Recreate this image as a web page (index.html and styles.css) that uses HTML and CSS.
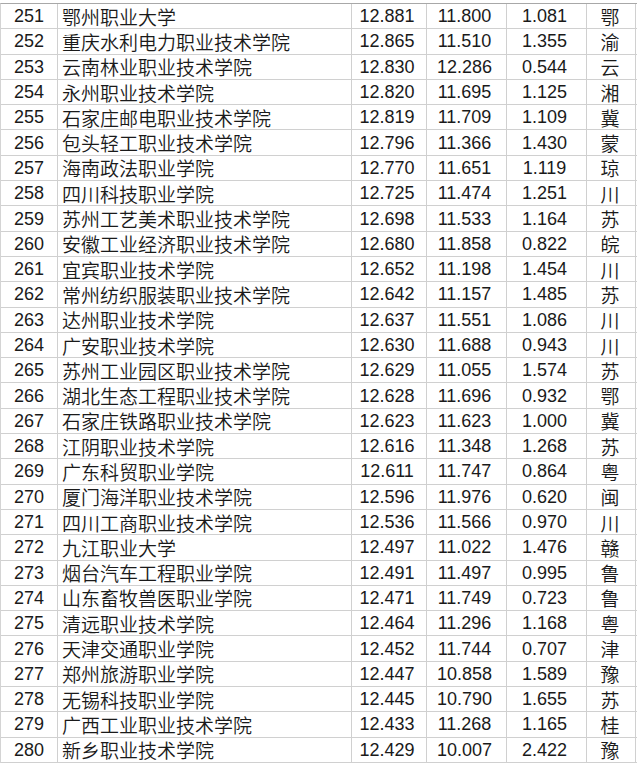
FILE: index.html
```html
<!DOCTYPE html>
<html lang="zh-CN">
<head>
<meta charset="utf-8">
<link rel="stylesheet" href="styles.css">
</head>
<body>
<div class="sheet">
<div class="row"><span class="c rank">251</span><span class="c name">鄂州职业大学</span><span class="c n">12.881</span><span class="c n">11.800</span><span class="c n">1.081</span><span class="c prov">鄂</span></div>
<div class="row"><span class="c rank">252</span><span class="c name">重庆水利电力职业技术学院</span><span class="c n">12.865</span><span class="c n">11.510</span><span class="c n">1.355</span><span class="c prov">渝</span></div>
<div class="row"><span class="c rank">253</span><span class="c name">云南林业职业技术学院</span><span class="c n">12.830</span><span class="c n">12.286</span><span class="c n">0.544</span><span class="c prov">云</span></div>
<div class="row"><span class="c rank">254</span><span class="c name">永州职业技术学院</span><span class="c n">12.820</span><span class="c n">11.695</span><span class="c n">1.125</span><span class="c prov">湘</span></div>
<div class="row"><span class="c rank">255</span><span class="c name">石家庄邮电职业技术学院</span><span class="c n">12.819</span><span class="c n">11.709</span><span class="c n">1.109</span><span class="c prov">冀</span></div>
<div class="row"><span class="c rank">256</span><span class="c name">包头轻工职业技术学院</span><span class="c n">12.796</span><span class="c n">11.366</span><span class="c n">1.430</span><span class="c prov">蒙</span></div>
<div class="row"><span class="c rank">257</span><span class="c name">海南政法职业学院</span><span class="c n">12.770</span><span class="c n">11.651</span><span class="c n">1.119</span><span class="c prov">琼</span></div>
<div class="row"><span class="c rank">258</span><span class="c name">四川科技职业学院</span><span class="c n">12.725</span><span class="c n">11.474</span><span class="c n">1.251</span><span class="c prov">川</span></div>
<div class="row"><span class="c rank">259</span><span class="c name">苏州工艺美术职业技术学院</span><span class="c n">12.698</span><span class="c n">11.533</span><span class="c n">1.164</span><span class="c prov">苏</span></div>
<div class="row"><span class="c rank">260</span><span class="c name">安徽工业经济职业技术学院</span><span class="c n">12.680</span><span class="c n">11.858</span><span class="c n">0.822</span><span class="c prov">皖</span></div>
<div class="row"><span class="c rank">261</span><span class="c name">宜宾职业技术学院</span><span class="c n">12.652</span><span class="c n">11.198</span><span class="c n">1.454</span><span class="c prov">川</span></div>
<div class="row"><span class="c rank">262</span><span class="c name">常州纺织服装职业技术学院</span><span class="c n">12.642</span><span class="c n">11.157</span><span class="c n">1.485</span><span class="c prov">苏</span></div>
<div class="row"><span class="c rank">263</span><span class="c name">达州职业技术学院</span><span class="c n">12.637</span><span class="c n">11.551</span><span class="c n">1.086</span><span class="c prov">川</span></div>
<div class="row"><span class="c rank">264</span><span class="c name">广安职业技术学院</span><span class="c n">12.630</span><span class="c n">11.688</span><span class="c n">0.943</span><span class="c prov">川</span></div>
<div class="row"><span class="c rank">265</span><span class="c name">苏州工业园区职业技术学院</span><span class="c n">12.629</span><span class="c n">11.055</span><span class="c n">1.574</span><span class="c prov">苏</span></div>
<div class="row"><span class="c rank">266</span><span class="c name">湖北生态工程职业技术学院</span><span class="c n">12.628</span><span class="c n">11.696</span><span class="c n">0.932</span><span class="c prov">鄂</span></div>
<div class="row"><span class="c rank">267</span><span class="c name">石家庄铁路职业技术学院</span><span class="c n">12.623</span><span class="c n">11.623</span><span class="c n">1.000</span><span class="c prov">冀</span></div>
<div class="row"><span class="c rank">268</span><span class="c name">江阴职业技术学院</span><span class="c n">12.616</span><span class="c n">11.348</span><span class="c n">1.268</span><span class="c prov">苏</span></div>
<div class="row"><span class="c rank">269</span><span class="c name">广东科贸职业学院</span><span class="c n">12.611</span><span class="c n">11.747</span><span class="c n">0.864</span><span class="c prov">粤</span></div>
<div class="row"><span class="c rank">270</span><span class="c name">厦门海洋职业技术学院</span><span class="c n">12.596</span><span class="c n">11.976</span><span class="c n">0.620</span><span class="c prov">闽</span></div>
<div class="row"><span class="c rank">271</span><span class="c name">四川工商职业技术学院</span><span class="c n">12.536</span><span class="c n">11.566</span><span class="c n">0.970</span><span class="c prov">川</span></div>
<div class="row"><span class="c rank">272</span><span class="c name">九江职业大学</span><span class="c n">12.497</span><span class="c n">11.022</span><span class="c n">1.476</span><span class="c prov">赣</span></div>
<div class="row"><span class="c rank">273</span><span class="c name">烟台汽车工程职业学院</span><span class="c n">12.491</span><span class="c n">11.497</span><span class="c n">0.995</span><span class="c prov">鲁</span></div>
<div class="row"><span class="c rank">274</span><span class="c name">山东畜牧兽医职业学院</span><span class="c n">12.471</span><span class="c n">11.749</span><span class="c n">0.723</span><span class="c prov">鲁</span></div>
<div class="row"><span class="c rank">275</span><span class="c name">清远职业技术学院</span><span class="c n">12.464</span><span class="c n">11.296</span><span class="c n">1.168</span><span class="c prov">粤</span></div>
<div class="row"><span class="c rank">276</span><span class="c name">天津交通职业学院</span><span class="c n">12.452</span><span class="c n">11.744</span><span class="c n">0.707</span><span class="c prov">津</span></div>
<div class="row"><span class="c rank">277</span><span class="c name">郑州旅游职业学院</span><span class="c n">12.447</span><span class="c n">10.858</span><span class="c n">1.589</span><span class="c prov">豫</span></div>
<div class="row"><span class="c rank">278</span><span class="c name">无锡科技职业学院</span><span class="c n">12.445</span><span class="c n">10.790</span><span class="c n">1.655</span><span class="c prov">苏</span></div>
<div class="row"><span class="c rank">279</span><span class="c name">广西工业职业技术学院</span><span class="c n">12.433</span><span class="c n">11.268</span><span class="c n">1.165</span><span class="c prov">桂</span></div>
<div class="row"><span class="c rank">280</span><span class="c name">新乡职业技术学院</span><span class="c n">12.429</span><span class="c n">10.007</span><span class="c n">2.422</span><span class="c prov">豫</span></div>
</div>
</body>
</html>
```
FILE: styles.css
```css
html, body {
  margin: 0;
  padding: 0;
  background: #ffffff;
}
body {
  font-family: "Liberation Sans", Arial, "Noto Sans CJK SC", sans-serif;
  color: #1a1a1a;
}
.sheet {
  margin-top: 3px;
  width: 636px;
  display: flex;
  flex-direction: column;
  border-top: 1px solid #a8a8a8;
  border-left: 1px solid #d4d4d4;
}
.row {
  display: grid;
  grid-template-columns: 57px 294px 75px 80px 80px 49px;
  height: 25.3px;
  box-sizing: border-box;
  border-bottom: 1px solid #d0d0d0;
}
.c {
  display: flex;
  align-items: center;
  justify-content: center;
  border-right: 1px solid #d0d0d0;
  font-size: 18px;
  line-height: 1;
  white-space: nowrap;
  overflow: hidden;
}
.name {
  justify-content: flex-start;
  padding-left: 4px;
  font-family: "Noto Sans CJK SC", sans-serif;
  font-size: 19px;
  font-weight: 350;
}
.n {
  padding-right: 4px;
}
.prov {
  font-family: "Noto Sans CJK SC", sans-serif;
  font-size: 19px;
  font-weight: 350;
  padding-right: 2px;
}
```
